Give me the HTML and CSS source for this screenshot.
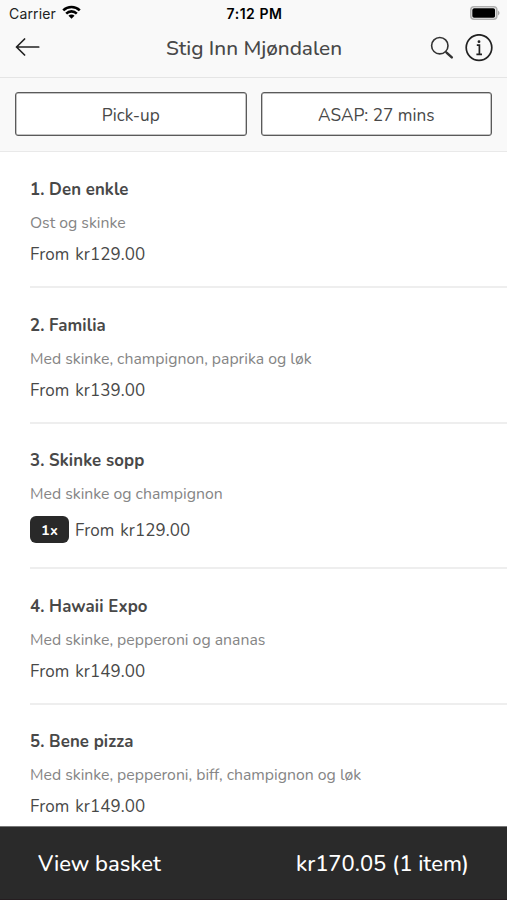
FILE: index.html
```html
<!DOCTYPE html>
<html lang="no">
<head>
<meta charset="utf-8">
<title>Stig Inn Mjøndalen</title>
<link rel="stylesheet" href="styles.css">
</head>
<body>
<div class="app">
  <header class="top">
    <div class="status">
      <div class="carrier"><span>Carrier</span>
        <svg width="19" height="15" viewBox="0 0 20 15" fill="none" stroke="#000" stroke-width="2.7"><path d="M1.3 5.3a12.5 12.5 0 0 1 17.4 0M4.4 8.6a8 8 0 0 1 11.2 0"/><path d="M10 14.2 6.8 11a4.5 4.5 0 0 1 6.4 0z" fill="#000" stroke="none"/></svg>
      </div>
      <span class="time">7:12 PM</span>
      <svg class="battery" width="30" height="14" viewBox="0 0 30 14"><rect x=".8" y=".8" width="26" height="12.4" rx="3.2" fill="#f9f9f9" stroke="#b0b0b0" stroke-width="1.6"/><rect x="2.3" y="2.3" width="22.8" height="9.4" rx="1.8"/><path d="M28 4.6q3.2 2.4 0 4.8z" fill="#aaa"/></svg>
    </div>
    <nav class="nav">
      <svg class="back" width="26" height="20" viewBox="0 0 26 20" fill="none" stroke="#222" stroke-width="1.7" stroke-linecap="round" stroke-linejoin="round"><path d="M23.7 10H1.5M9.6 2 1.5 10l8.1 8"/></svg>
      <h1>Stig Inn Mjøndalen</h1>
      <div class="actions">
        <svg width="24" height="24" viewBox="0 0 24 24" fill="none" stroke="#333"><circle cx="9.8" cy="9.7" r="8.2" stroke-width="1.6"/><path d="M15.6 15.6 17 17" stroke-width="1.6"/><path d="m16.8 16.8 5 4.6" stroke-width="2.5" stroke-linecap="round"/></svg>
        <svg width="28" height="28" viewBox="0 0 28 28" fill="none" stroke="#222" stroke-width="1.7"><circle cx="14" cy="13.6" r="12.8"/><path d="M11.8 11.2h2.6v9M11.4 20.3h5.6"/><circle cx="14" cy="7.7" r="1.4" fill="#222" stroke="none"/></svg>
      </div>
    </nav>
  </header>
  <div class="options">
    <button>Pick-up</button>
    <button>ASAP: 27 mins</button>
  </div>
  <main class="menu">
    <article><h2>1. Den enkle</h2><p class="desc">Ost og skinke</p><div class="price"><span>From kr129.00</span></div></article>
    <article><h2>2. Familia</h2><p class="desc">Med skinke, champignon, paprika og løk</p><div class="price"><span>From kr139.00</span></div></article>
    <article class="selected"><h2>3. Skinke sopp</h2><p class="desc">Med skinke og champignon</p><div class="price"><b class="badge">1x</b><span>From kr129.00</span></div></article>
    <article><h2>4. Hawaii Expo</h2><p class="desc">Med skinke, pepperoni og ananas</p><div class="price"><span>From kr149.00</span></div></article>
    <article><h2>5. Bene pizza</h2><p class="desc">Med skinke, pepperoni, biff, champignon og løk</p><div class="price"><span>From kr149.00</span></div></article>
  </main>
  <footer class="basket"><span>View basket</span><span>kr170.05 (1 item)</span></footer>
</div>
</body>
</html>
```
FILE: styles.css
```css
* { box-sizing: border-box; }
body { margin: 0; background: #fff; color: #484848; font-family: Nunito, Lato, sans-serif; }
h1, h2, p { margin: 0; }
svg { display: block; flex: none; }
.app { height: 900px; display: flex; flex-direction: column; overflow: hidden; }
.top { height: 78px; background: #f9f9f9; border-bottom: 1px solid #e5e5e5; flex: none; }
.status { height: 27px; padding: 0 7px 0 9px; display: grid; grid-template-columns: 1fr auto 1fr; align-items: center; font: 14px/27px Inter, sans-serif; color: #222; }
.carrier { display: flex; align-items: center; gap: 6px; letter-spacing: .15px; }
.carrier svg { margin-top: -2px; }
.time { font-weight: 600; color: #000; letter-spacing: .55px; }
.battery { justify-self: end; margin-top: -1px; }
.nav { height: 41px; padding: 0 14px 0 15px; display: grid; grid-template-columns: 1fr auto 1fr; align-items: center; }
.back { margin-top: -2px; }
h1 { font-size: 20.8px; font-weight: 500; line-height: 28px; white-space: nowrap; letter-spacing: -.03px; }
.actions { justify-self: end; display: flex; align-items: center; gap: 11px; }
.options { height: 74px; padding: 14px 15px 15px; display: grid; grid-template-columns: 1fr 1fr; gap: 14px; background: #f9f9f9; border-bottom: 1px solid #e9e9e9; flex: none; }
button { font: 17.2px/24px Nunito, Lato, sans-serif; color: #484848; background: #fff; border: 1px solid #5a5a5a; box-shadow: inset 0 0 0 .5px #888; border-radius: 3px; padding: 3px 0 0; }
.menu { flex: 1; min-height: 0; overflow: hidden; padding: .6px 0 0 30px; }
article { height: 135.6px; padding-top: 25.4px; border-bottom: 2px solid #eee; }
.selected { height: 145.5px; }
h2 { font-size: 16.8px; font-weight: 700; line-height: 24px; white-space: nowrap; letter-spacing: .1px; }
.desc { margin-top: 11px; font-size: 15.8px; line-height: 20px; color: #858585; white-space: nowrap; }
.price { margin-top: 10px; display: flex; align-items: center; gap: 6px; font-size: 17px; line-height: 24px; letter-spacing: .08px; word-spacing: 1.3px; }
.selected .price { margin-top: 11.5px; height: 27px; }
.selected .price span { padding-top: 3px; }
.badge { width: 39px; height: 27px; border-radius: 6px; background: #292929; color: #fff; font-size: 14.5px; line-height: 28px; text-align: center; }
.basket { height: 74px; flex: none; background: #2a2a2a; border-top: 1px solid #777; border-bottom: 1px solid #251d20; color: #fff; display: flex; justify-content: space-between; align-items: center; padding: 1px 38px 0; font-size: 22px; font-weight: 500; line-height: 30px; }
```
